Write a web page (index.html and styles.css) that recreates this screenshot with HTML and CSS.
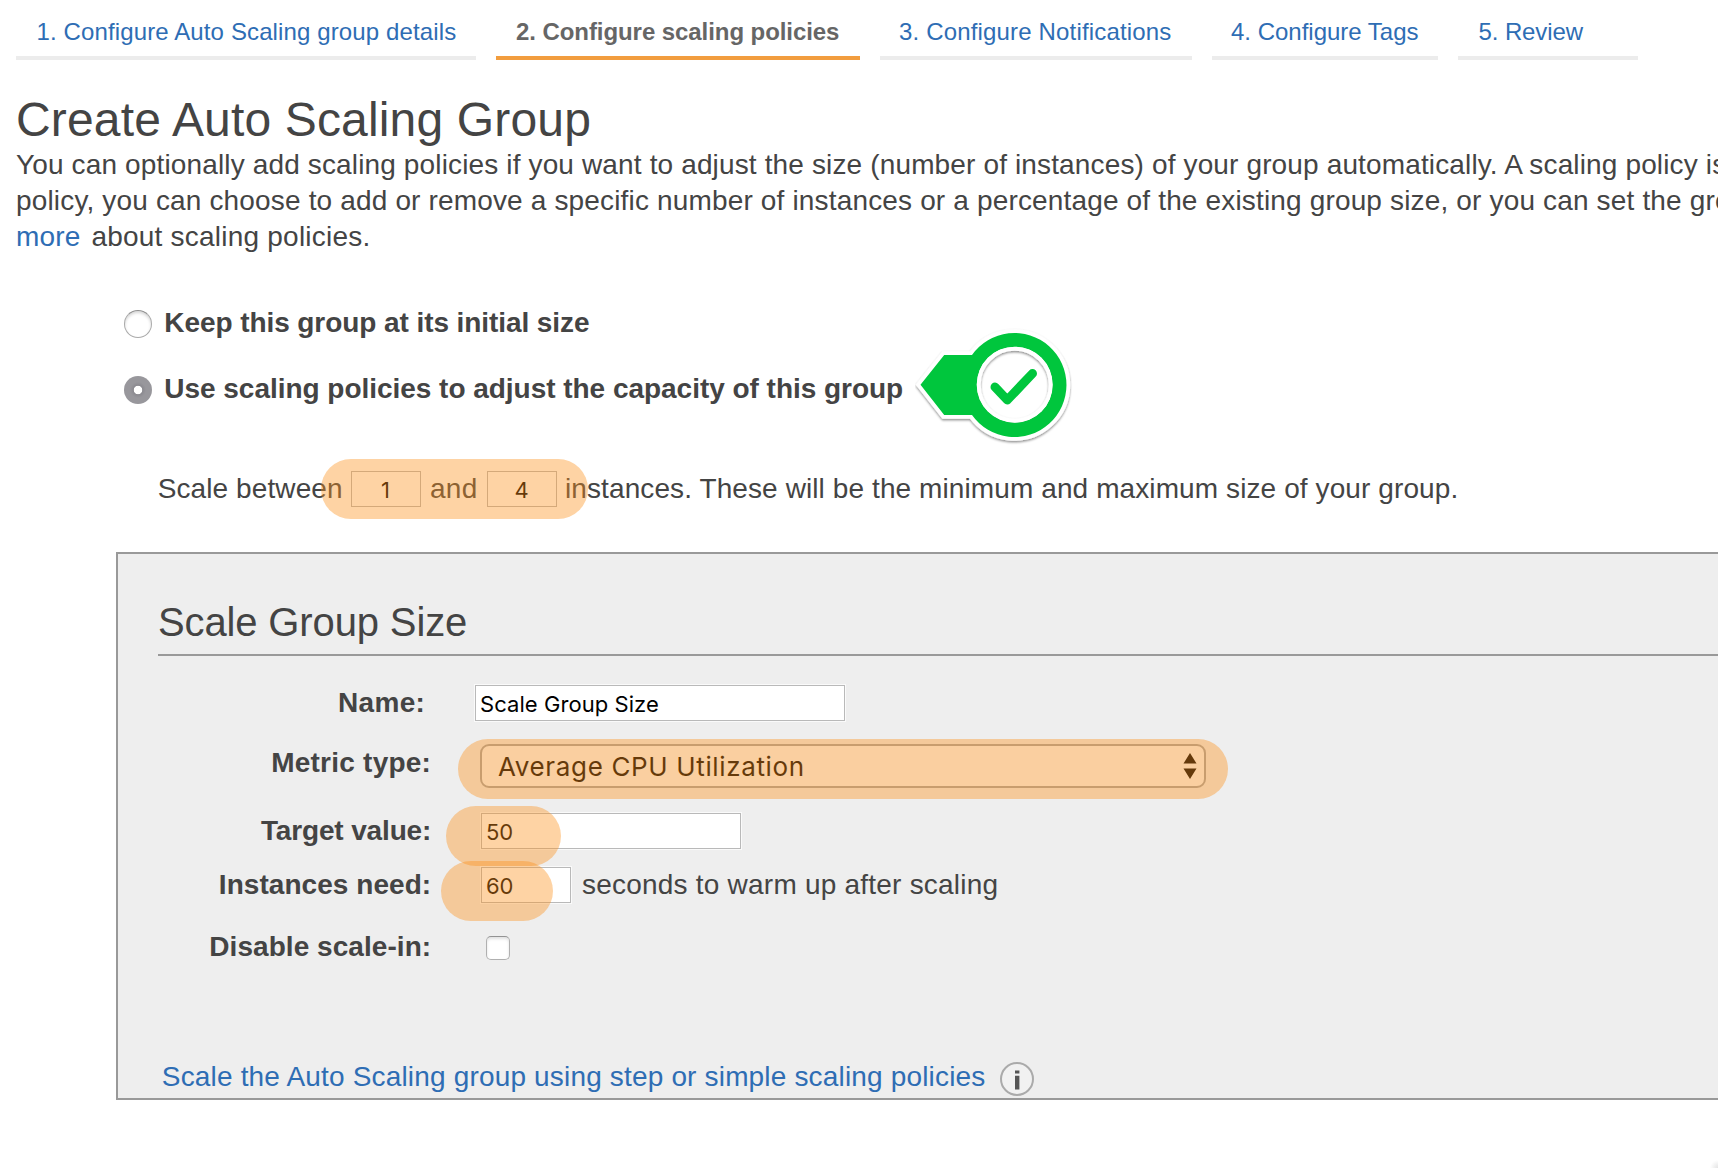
FILE: index.html
```html
<!DOCTYPE html>
<html lang="en">
<head>
<meta charset="utf-8">
<title>Create Auto Scaling Group</title>
<link rel="stylesheet" href="styles.css">
</head>
<body>
<nav class="steps">
  <a class="step step-details" href="#">1. Configure Auto Scaling group details</a>
  <a class="step step-policies active" href="#">2. Configure scaling policies</a>
  <a class="step step-notify" href="#">3. Configure Notifications</a>
  <a class="step step-tags" href="#">4. Configure Tags</a>
  <a class="step step-review" href="#">5. Review</a>
</nav>
<main>
  <header class="intro">
    <h1>Create Auto Scaling Group</h1>
    <p><span class="line1">You can optionally add scaling policies if you want to adjust the size (number of instances) of your group automatically. A scaling policy is</span><br>
    policy, you can choose to add or remove a specific number of instances or a percentage of the existing group size, or you can set the gro<br>
    <a class="more" href="#">more</a><span class="about">about scaling policies.</span></p>
  </header>

  <div class="options">
    <label class="option"><span class="radio"></span><span>Keep this group at its initial size</span></label>
    <label class="option"><span class="radio checked"></span><span>Use scaling policies to adjust the capacity of this group</span>
      <svg class="callout" width="160" height="120" viewBox="0 0 160 120">
        <defs>
          <filter id="shade" x="-10%" y="-10%" width="120%" height="125%">
            <feDropShadow dx="0" dy="1.5" stdDeviation="1" flood-color="#000" flood-opacity=".45"/>
          </filter>
          <clipPath id="dial"><circle cx="99.700" cy="59.700" r="38"/></clipPath>
        </defs>
        <g filter="url(#shade)">
          <path d="M5.500 59.700 29.200 30H57A52 52 0 1 1 57 90H29.200Z" fill="#fff" stroke="#fff" stroke-width="7.500"/>
        </g>
        <path d="M5.500 59.700 29.200 30H57A52 52 0 1 1 57 90H29.200Z" fill="#00c63d"/>
        <circle cx="99.700" cy="59.700" r="38" fill="#fff"/>
        <g clip-path="url(#dial)">
          <circle cx="99.700" cy="59.700" r="36" fill="none" stroke="#fff" stroke-width="4" filter="url(#shade)"/>
        </g>
        <path d="M80 62 92.300 75 117.500 48.500" fill="none" stroke="#00c63d" stroke-width="9" stroke-linecap="round" stroke-linejoin="round"/>
      </svg>
    </label>
  </div>

  <div class="range">
    <span class="between">Scale between</span>
    <input class="num" value="1">
    <span class="and">and</span>
    <input class="num" value="4">
    <span class="after">instances. These will be the minimum and maximum size of your group.</span>
    <i class="mark mark-range"></i>
  </div>

  <section class="panel">
    <h2>Scale Group Size</h2>
    <div class="row row-name">
      <label>Name:</label>
      <input class="field name" value="Scale Group Size">
    </div>
    <div class="row row-metric">
      <label>Metric type:</label>
      <div class="select"><span>Average CPU Utilization</span>
        <svg width="14" height="26" viewBox="0 0 14 26"><path d="M7 0 13.500 10.500H.5ZM.5 15.500H13.500L7 26Z"/></svg>
      </div>
      <i class="mark mark-metric"></i>
    </div>
    <div class="row row-target">
      <label>Target value:</label>
      <input class="field target" value="50">
      <i class="mark mark-target"></i>
    </div>
    <div class="row row-warmup">
      <label>Instances need:</label>
      <input class="field seconds" value="60">
      <span class="unit">seconds to warm up after scaling</span>
      <i class="mark mark-warmup"></i>
    </div>
    <div class="row row-disable">
      <label>Disable scale-in:</label>
      <span class="checkbox"></span>
    </div>
    <div class="alt">
      <a href="#">Scale the Auto Scaling group using step or simple scaling policies</a>
      <svg width="36" height="36" viewBox="0 0 36 36"><circle cx="18" cy="18" r="16" fill="#f1f1f1" stroke="#aaa" stroke-width="2"/><path d="M16 9.500h4.400v3H16ZM16 14.800h4.400V28.500H16Z" fill="#555"/></svg>
    </div>
  </section>
</main>
</body>
</html>
```
FILE: styles.css
```css
* { box-sizing: border-box; }
html, body { height: 1168px; overflow: hidden; }
body {
  margin: 0;
  background: radial-gradient(circle 8px at 100% 100%, #e4e4e4, #fff) #fff;
  color: #444;
  font: 28px/36px "Liberation Sans", Arial, sans-serif;
  white-space: nowrap;
}
a { color: #2e6db4; text-decoration: none; }
input {
  font: 22px/32px Inter, sans-serif;
  color: #000;
  background: #fff;
  border: 1px solid #b9b9b9;
  margin: 0;
  padding: 2px 5px 0;
  height: 36px;
  border-radius: 0;
}

/* wizard steps */
.steps { display: flex; gap: 20px; padding-left: 16px; height: 60px; font-size: 24px; }
.step { height: 60px; padding: 7px 0 0 20.5px; line-height: 49px; border-bottom: 4px solid #ececec; }
.step-details { width: 460px; letter-spacing: .125px; }
.step-policies { width: 364px; padding-left: 20px; letter-spacing: -.07px; }
.step-notify { width: 312px; padding-left: 19px; letter-spacing: .165px; }
.step-tags { width: 226px; padding-left: 19px; letter-spacing: -.01px; }
.step-review { width: 180px; letter-spacing: -.1px; }
.step.active { color: #666; font-weight: bold; border-color: #f29d3e; }

/* heading and description */
.intro { padding: 33px 0 0 16px; }
h1 { margin: 0; font-size: 48px; line-height: 54px; font-weight: normal; letter-spacing: .16px; }
p { margin: 0; letter-spacing: .159px; }
.line1 { letter-spacing: .142px; }
.more { margin-right: 11px; }
.about { letter-spacing: .22px; }

/* size options */
.options { display: flex; flex-direction: column; gap: 30px; padding: 49px 0 0 124px; }
.option { display: flex; gap: 12.300px; height: 36px; line-height: 38px; font-weight: bold; letter-spacing: -.03px; position: relative; }
.option:first-child { letter-spacing: -.076px; }
.radio {
  width: 28px; height: 28px; margin-top: 6px; border-radius: 50%;
  border: 1px solid #aaa; border-top-color: #8f8f8f;
  background: #fff; box-shadow: inset 0 2px 3px rgba(0,0,0,.16);
}
.radio.checked { border: 0; background: radial-gradient(circle, #fff 3.800px, #8b8a90 4.600px, #98979c 8px); box-shadow: none; }
.callout { position: absolute; left: 791px; top: -45px; }

/* min and max */
.range { display: flex; height: 36px; line-height: 38px; margin-top: 64px; padding-left: 157.700px; position: relative; letter-spacing: .1px; }
.between { width: 193.300px; }
.num { width: 70px; margin-top: 1px; padding: 2px 1px 0 0; text-align: center; }
.and { width: 66px; padding-left: 9px; letter-spacing: .3px; }
.after { padding-left: 8px; }

/* translucent highlighter strokes */
.mark { position: absolute; height: 60px; border-radius: 30px; background: rgba(252,145,27,.4); }
.mark-range { left: 320.500px; top: -11.500px; width: 267.500px; }
.mark-metric { left: 299.500px; top: -5px; width: 770.500px; }
.mark-target { left: 287.500px; top: -6px; width: 115.500px; }
.mark-warmup { left: 282.500px; top: -5.500px; width: 112.500px; }

/* policy panel */
.panel {
  margin: 46px -20px 0 116px; height: 548px; padding: 44px 0 0 40px;
  background: #eee; border: 2px solid #999;
}
h2 { margin: 0 0 28px; height: 58px; font-size: 40px; line-height: 48px; font-weight: normal; letter-spacing: -.135px; border-bottom: 2px solid #999; }
.row { display: flex; position: relative; height: 36px; }
.row label { width: 273.200px; text-align: right; font-weight: bold; }
.row-name label { padding-right: 6px; letter-spacing: .3px; }
.row-metric label { letter-spacing: .24px; }
.row-target label { letter-spacing: -.15px; }
.row-warmup label, .row-disable label { letter-spacing: .05px; }
.field { margin-top: 1px; box-shadow: 0 0 0 1px #fafafa; }
.name { width: 370px; margin-left: 43.800px; padding-left: 4px; letter-spacing: .06px; }
.row-metric { margin-top: 24px; height: 44px; }
.row, .alt { line-height: 38px; }
.select {
  width: 726px; height: 44px; margin-left: 48.800px; padding: 0 7px 0 16px;
  display: flex; justify-content: space-between; align-items: center;
  border: 2px solid #a6a6a6; border-radius: 9px; background: #f8f8f8;
  color: #000; font: 26px/38px Inter, sans-serif; letter-spacing: .646px;
}
.select span { padding-top: 2px; }
.row-target { margin-top: 24px; }
.target { width: 260px; margin-left: 49.800px; padding-left: 4px; letter-spacing: -.2px; }
.row-warmup { margin-top: 18px; }
.seconds { width: 90px; margin-left: 49.800px; padding-left: 4px; letter-spacing: -.2px; }
.unit { margin-left: 11px; letter-spacing: .22px; }
.row-disable { margin-top: 26px; }
.checkbox {
  width: 24px; height: 24px; margin: 8px 0 0 54.800px; border-radius: 5px;
  border: 1px solid #b0b0b0; border-top-color: #939393;
  background: #fff; box-shadow: inset 0 2px 3px rgba(0,0,0,.12);
}
.alt { display: flex; gap: 14px; height: 36px; margin-top: 94px; padding-left: 3.800px; letter-spacing: .17px; }
.alt svg { margin-top: 3px; }
```
